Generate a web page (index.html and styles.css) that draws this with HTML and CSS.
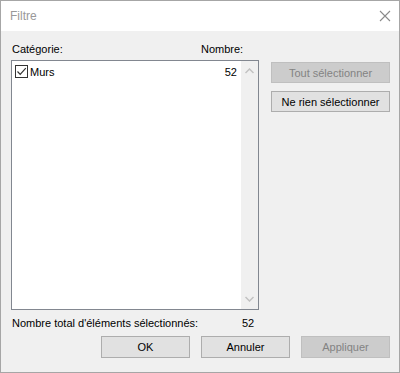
FILE: index.html
```html
<!DOCTYPE html>
<html>
<head>
    <meta charset="UTF-8" />
    <title>Filtre</title>
    <link rel="stylesheet" href="styles.css">
</head>
<body>
<div class="window">
    <div class="titlebar">
        <span class="title">Filtre</span>
        <svg class="close" width="12" height="12" viewBox="0 0 12 12">
            <path d="M1 1L11 11M11 1L1 11" stroke="#8a8a8a" stroke-width="1.1" fill="none"/>
        </svg>
    </div>
    <div class="content">
        <div class="main">
            <div class="left">
                <div class="labels">
                    <span class="cat-label">Catégorie:</span>
                    <span>Nombre:</span>
                </div>
                <div class="listbox">
                    <div class="items">
                        <div class="item">
                            <span class="check">
                                <svg width="11" height="11" viewBox="0 0 11 11">
                                    <path d="M1.5 5.5L4.2 8.3L9.8 2.2" stroke="#333" stroke-width="1.2" fill="none"/>
                                </svg>
                            </span>
                            <span class="name">Murs</span>
                            <span class="count">52</span>
                        </div>
                    </div>
                    <div class="scrollbar">
                        <svg width="9" height="6" viewBox="0 0 9 6">
                            <path d="M0.5 5L4.5 1L8.5 5" stroke="#c2c2c2" stroke-width="1.5" fill="none"/>
                        </svg>
                        <svg width="9" height="6" viewBox="0 0 9 6">
                            <path d="M0.5 1L4.5 5L8.5 1" stroke="#c2c2c2" stroke-width="1.5" fill="none"/>
                        </svg>
                    </div>
                </div>
            </div>
            <div class="side">
                <button class="btn" disabled>Tout sélectionner</button>
                <button class="btn">Ne rien sélectionner</button>
            </div>
        </div>
        <div class="total">
            <span class="total-label">Nombre total d'éléments sélectionnés:</span>
            <span>52</span>
        </div>
        <div class="actions">
            <button class="btn">OK</button>
            <button class="btn">Annuler</button>
            <button class="btn" disabled>Appliquer</button>
        </div>
    </div>
</div>
</body>
</html>
```

FILE: styles.css
```css
*{
    margin: 0;
    padding: 0;
    box-sizing: border-box;
}
body{
    font-family: "Liberation Sans", Arial, sans-serif;
    font-size: 11px;
    color: #000;
    background: #fff;
}
.window{
    width: 400px;
    height: 373px;
    border: 1px solid #a6a6a6;
    background-color: #f0f0f0;
    display: flex;
    flex-direction: column;
}
.titlebar{
    height: 30px;
    background-color: #fff;
    display: flex;
    align-items: center;
    justify-content: space-between;
    padding: 0 9px 1px 9px;
}
.title{
    color: #999;
    font-size: 12px;
}
.close{
    margin-right: -1px;
}
.content{
    padding: 11px 9px 0 10px;
}
.main{
    display: grid;
    grid-template-columns: 248px 119px;
    column-gap: 12px;
}
.labels{
    display: flex;
    height: 15px;
    line-height: 15px;
    margin-bottom: 3px;
    padding-left: 1px;
}
.cat-label{
    width: 189px;
}
.listbox{
    height: 250px;
    border: 1px solid #828790;
    background-color: #fff;
    display: flex;
}
.items{
    flex: 1;
    padding: 3px 4px 0 3px;
}
.item{
    display: flex;
    align-items: center;
    height: 15px;
}
.check{
    width: 13px;
    height: 13px;
    border: 1px solid #333;
    background: #fff;
    display: flex;
    align-items: center;
    justify-content: center;
    margin-right: 2px;
}
.name{
    flex: 1;
}
.scrollbar{
    width: 17px;
    background-color: #f0f0f0;
    display: flex;
    flex-direction: column;
    align-items: center;
    justify-content: space-between;
    padding: 7px 0 7px 0;
}
.side{
    display: flex;
    flex-direction: column;
    gap: 8px;
    padding-top: 20px;
}
.btn{
    font-family: "Liberation Sans", Arial, sans-serif;
    font-size: 11px;
    color: #000;
    height: 21px;
    border: 1px solid #adadad;
    background-color: #e1e1e1;
}
.btn:disabled{
    color: #838383;
    border-color: #bfbfbf;
    background-color: #cccccc;
}
.total{
    display: flex;
    height: 15px;
    line-height: 15px;
    margin-top: 6px;
    padding-left: 1px;
}
.total-label{
    width: 230px;
}
.actions{
    display: flex;
    justify-content: flex-end;
    gap: 11px;
    margin-top: 5px;
}
.actions .btn{
    width: 89px;
    height: 22px;
}
```
